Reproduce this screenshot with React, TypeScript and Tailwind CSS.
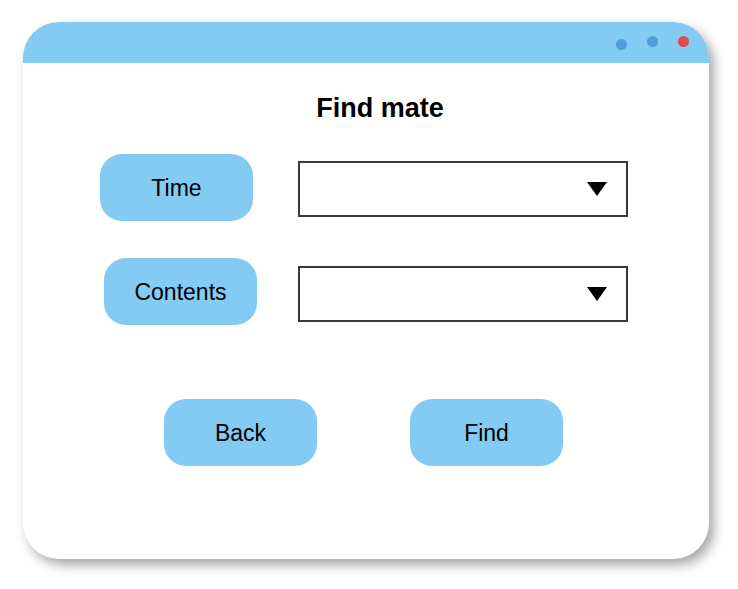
const pill = "flex h-[67px] w-[153px] items-center justify-center rounded-[22px] bg-[#83cbf2] pt-[2px] text-[23px] text-black";

const Select = () => (
  <div className="flex h-[56px] w-[330px] items-center justify-end border-2 border-[#3a3a3a] bg-white pr-[19px]">
    <svg width="20" height="14" viewBox="0 0 20 14">
      <polygon points="0,0 20,0 10,14" fill="#000" />
    </svg>
  </div>
);

export default function App() {
  return (
    <div className="h-[589px] w-[738px] bg-white pl-[23px] pt-[22px] font-['Liberation_Sans',Arial,sans-serif]">
      <div className="flex h-[537px] w-[686px] flex-col overflow-hidden rounded-[36px] bg-white shadow-[5px_6px_12px_rgba(0,0,0,0.35)]">
        <div className="relative h-[41px] shrink-0 bg-[#83cbf2]">
          <span className="absolute left-[593px] top-[17px] h-[11px] w-[11px] rounded-full bg-[#4f9dd9]" />
          <span className="absolute left-[624px] top-[14px] h-[11px] w-[11px] rounded-full bg-[#4f9dd9]" />
          <span className="absolute left-[655px] top-[14px] h-[11px] w-[11px] rounded-full bg-[#e2494a]" />
        </div>

        <h1 className="mt-[30px] pl-[28px] text-center text-[27px] font-bold leading-[31px] text-black">
          Find mate
        </h1>

        <div className="mt-[30px] flex items-start">
          <div className={`ml-[77px] ${pill}`}>Time</div>
          <div className="ml-[45px] mt-[7px]">
            <Select />
          </div>
        </div>

        <div className="mt-[37px] flex items-start">
          <div className={`ml-[81px] ${pill}`}>Contents</div>
          <div className="ml-[41px] mt-[8px]">
            <Select />
          </div>
        </div>

        <div className="mt-[74px] flex items-start">
          <button className={`ml-[141px] ${pill}`}>Back</button>
          <button className={`ml-[93px] ${pill}`}>Find</button>
        </div>
      </div>
    </div>
  );
}
